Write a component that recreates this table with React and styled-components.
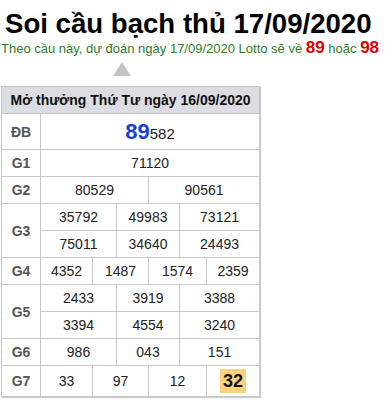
import React from "react";
import styled, { createGlobalStyle } from "styled-components";

const GlobalStyle = createGlobalStyle`
  html, body {
    margin: 0;
    padding: 0;
    background: #fff;
    font-family: "Liberation Sans", Arial, sans-serif;
  }
`;

const Page = styled.div`
  width: 390px;
  height: 400px;
  overflow: hidden;
  padding-top: 8px;
  box-sizing: border-box;
`;

const Title = styled.h1`
  margin: 0 0 0 5px;
  font-size: 27.6px;
  line-height: 31px;
  font-weight: 700;
  color: #000;
  white-space: nowrap;
`;

const Prediction = styled.div`
  margin: 0 0 0 1px;
  height: 18px;
  font-size: 13px;
  line-height: 18px;
  color: #2e7d1e;
  white-space: nowrap;
`;

const Hot = styled.b`
  color: #e00000;
  font-size: 17px;
`;

const Arrow = styled.div`
  width: 0;
  height: 0;
  margin: 5px 0 10px 113px;
  border-left: 9px solid transparent;
  border-right: 9px solid transparent;
  border-bottom: 14px solid #c4c4c4;
`;

const Table = styled.table`
  margin-left: 1px;
  width: 259px;
  table-layout: fixed;
  border-collapse: collapse;
  font-size: 14px;
  color: #222;
  box-shadow: 1px 1px 1px #ccc;
`;

const Head = styled.th`
  height: 26px;
  padding: 0;
  background: #dcdde3;
  border: 1px solid #c2c2c8;
  font-size: 14px;
  font-weight: 700;
  color: #111;
  text-align: center;
  white-space: nowrap;
`;

const Label = styled.td`
  padding: 0;
  border: 1px solid #c8c8c8;
  text-align: center;
  font-weight: 700;
  color: #555;
  font-size: 14px;
`;

const Cell = styled.td`
  height: ${(p) => p.$h || 26}px;
  padding: 0;
  border: 1px solid #c8c8c8;
  text-align: center;
  white-space: nowrap;
`;

const Special = styled.b`
  color: #1a3fd6;
  font-size: 22px;
`;

const Tail = styled.span`
  font-size: 15px;
`;

const Loto = styled.b`
  display: inline-block;
  padding: 2px 3px 1px;
  background: #fcd17e;
  color: #111;
  font-size: 18px;
  line-height: 21px;
`;

const widths = [39, 52, 24, 32, 31, 27, 53];

const rows = [
  { label: "G1", groups: [[["71120", 6]]] },
  { label: "G2", groups: [[["80529", 3], ["90561", 3]]] },
  {
    label: "G3",
    groups: [
      [["35792", 2], ["49983", 2], ["73121", 2]],
      [["75011", 2], ["34640", 2], ["24493", 2]],
    ],
  },
  { label: "G4", groups: [[["4352", 1], ["1487", 2], ["1574", 2], ["2359", 1]]] },
  {
    label: "G5",
    groups: [
      [["2433", 2], ["3919", 2], ["3388", 2]],
      [["3394", 2], ["4554", 2], ["3240", 2]],
    ],
  },
  { label: "G6", groups: [[["986", 2], ["043", 2], ["151", 2]]] },
];

export default function App() {
  return (
    <Page>
      <GlobalStyle />
      <Title>Soi cầu bạch thủ 17/09/2020</Title>
      <Prediction>
        Theo cầu này, dự đoán ngày 17/09/2020 Lotto sẽ về <Hot>89</Hot> hoặc{" "}
        <Hot>98</Hot>
      </Prediction>
      <Arrow />
      <Table>
        <colgroup>
          {widths.map((w, i) => (
            <col key={i} style={{ width: w }} />
          ))}
        </colgroup>
        <thead>
          <tr>
            <Head colSpan={7}>Mở thưởng Thứ Tư ngày 16/09/2020</Head>
          </tr>
        </thead>
        <tbody>
          <tr>
            <Label>ĐB</Label>
            <Cell colSpan={6} $h={35}>
              <Special>89</Special>
              <Tail>582</Tail>
            </Cell>
          </tr>
          {rows.map((r) =>
            r.groups.map((g, gi) => (
              <tr key={r.label + gi}>
                {gi === 0 && <Label rowSpan={r.groups.length}>{r.label}</Label>}
                {g.map(([n, span], ci) => (
                  <Cell key={ci} colSpan={span}>
                    {n}
                  </Cell>
                ))}
              </tr>
            ))
          )}
          <tr>
            <Label>G7</Label>
            <Cell $h={30}>33</Cell>
            <Cell colSpan={2}>97</Cell>
            <Cell colSpan={2}>12</Cell>
            <Cell>
              <Loto>32</Loto>
            </Cell>
          </tr>
        </tbody>
      </Table>
    </Page>
  );
}
